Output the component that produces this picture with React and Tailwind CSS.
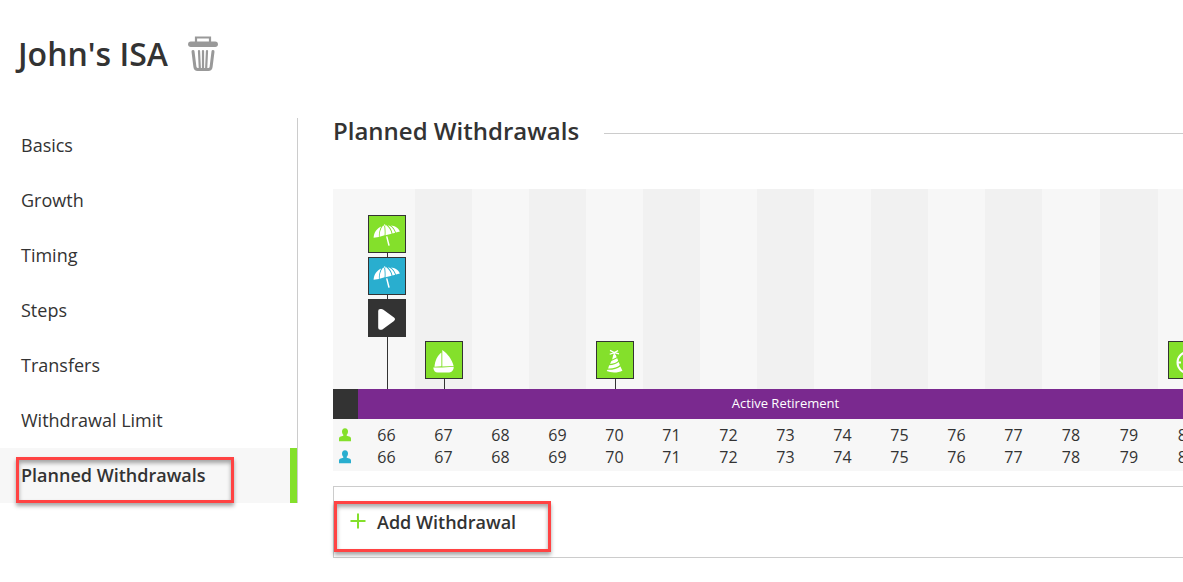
import clsx from 'clsx';

const NAV_ITEMS = ['Basics', 'Growth', 'Timing', 'Steps', 'Transfers', 'Withdrawal Limit', 'Planned Withdrawals'];

const AGES = [66, 67, 68, 69, 70, 71, 72, 73, 74, 75, 76, 77, 78, 79, 80];

const EVENTS = {
  66: [
    { icon: UmbrellaIcon, bg: 'bg-[#84e02b]' },
    { icon: UmbrellaIcon, bg: 'bg-[#29aecf]' },
    { icon: PlayIcon, bg: 'bg-[#333333]', last: true },
  ],
  67: [{ icon: BoatIcon, bg: 'bg-[#84e02b]' }],
  70: [{ icon: PartyHatIcon, bg: 'bg-[#84e02b]' }],
  80: [{ icon: ClockIcon, bg: 'bg-[#84e02b]' }],
};

function columnWidth(age) {
  return age >= 78 ? 'w-[58px]' : 'w-[57px]';
}

// ─── Icons ────────────────────────────────────────────────────────────────────

function TrashIcon() {
  return (
    <svg className="mt-px" width="30" height="36" viewBox="0 0 30 36" fill="none" stroke="#999999">
      <path d="M8 6V1.500h14V6" strokeWidth="2.200" />
      <path d="M2.800 8.300h24.400" strokeWidth="5.400" strokeLinecap="round" />
      <path
        d="M5 15.500l1.900 15.300q.3 2.600 2.800 2.600h10.600q2.500 0 2.800-2.600L25 15.500"
        strokeWidth="3"
        strokeLinecap="round"
      />
      <path d="M11 15l.8 17M15 15v17M19 15l-.8 17" strokeWidth="2.200" strokeLinecap="round" />
    </svg>
  );
}

function UmbrellaIcon() {
  return (
    <svg className="size-9" viewBox="1 1 36 36" fill="#fff">
      <path d="M5.600 22.800c.2-5.500 3.500-9.600 7.600-11.400-1.600 3-2.500 6.600-2.300 10.500z" />
      <path d="M11.600 21.700c-.1-4.400 1.100-8.200 3.100-10.800l1.400-.3c.4 3 .8 6.400.5 9.700z" />
      <path d="M17.500 20.200c.2-3.500 0-6.600-.5-9.700l1.300-.2c2.700 2 4.700 4.900 5.300 8.400z" />
      <path d="M24.500 18.500c-.7-3.400-2.300-6.100-4.600-8.200 3 .5 5.600 3 7.300 7.500z" />
      <path d="M28 17.500c-1.200-3.100-2.900-5.400-5.100-6.900 3.900.2 7.500 2.400 9 6z" />
      <path d="M16 9.500l1.100-.3.300 1.400-1.100.3zM18 21.600l1.400-.3 2.400 9.100-1.500.4z" />
    </svg>
  );
}

function PlayIcon() {
  return (
    <svg className="size-9" viewBox="1 1 36 36" fill="#fff">
      <path d="M10.200 12q0-2 2-2h1.200q1 0 2 .8l10.600 7.700q2 1.700 0 3.400l-10.600 7.900q-1 .9-2 .9h-1.200q-2 0-2-2z" />
    </svg>
  );
}

function BoatIcon() {
  return (
    <svg className="size-9" viewBox="1 1 36 36" fill="#fff">
      <path d="M16.400 11.500v13.800l-6.900.4c.4-5.800 2.900-11.200 6.900-14.200z" />
      <path d="M17.300 9c5.300 3.700 9.600 9.300 11.300 15.900l-11.300.5z" />
      <path d="M8.300 26.500h8.900l11.500-.7c.1 3.100-1.900 5.700-4.500 5.700H12.800c-2.700 0-4.300-2-4.500-5z" />
    </svg>
  );
}

function PartyHatIcon() {
  return (
    <svg className="size-9" viewBox="1 1 36 36" fill="#fff">
      <path d="M14 9.400l4.300 2.200 3.800-2M13.700 13.200l4.600-1.600 4.700 1.200M18.300 11.600v3" stroke="#fff" strokeWidth="1.200" fill="none" />
      <path d="M17.300 13.800l2.300-.2 1.100 2.700-4.600 2.200z" />
      <path d="M15.400 20.100l5.800-2.800 1 2.500c-1.600 1.800-4.600 3-8.100 3.200z" />
      <path d="M13.200 24.300c4-.2 7.200-1.300 9.500-3.200l1.200 3c-2.300 2.300-7.200 3.700-11.800 3.400z" />
      <path d="M11.500 28.800c4.800.3 9.500-1 12.900-3.400l2 4.300c-4 2.300-11.600 2.400-15.700.4z" />
    </svg>
  );
}

function ClockIcon() {
  return (
    <svg className="size-9" viewBox="1 1 36 36" fill="none" stroke="#fff" strokeWidth="2">
      <circle cx="20" cy="21.500" r="10.500" />
      <path d="M10 21.500h3M20 11v4M20 21.500l5-5" />
    </svg>
  );
}

function PersonIcon({ className }) {
  return (
    <svg className={className} width="12" height="14" viewBox="0 0 12 14" fill="currentColor">
      <path d="M6 .2c2 0 3 1.400 3 3.200 0 1.500-.6 2.800-1.300 3.400v1l2.500.6c1.200.3 1.800 1.200 1.800 2.400v2.400H0v-2.400C0 9.600.6 8.700 1.800 8.400l2.500-.6v-1C3.600 6.200 3 4.900 3 3.400 3 1.600 4 .2 6 .2z" />
    </svg>
  );
}

// ─── Sidebar ──────────────────────────────────────────────────────────────────

function Sidebar({ active }) {
  return (
    <nav className="h-[385px] w-[298px] shrink-0 border-r border-[#cccccc]">
      {NAV_ITEMS.map((item) => (
        <div
          key={item}
          className={clsx(
            'relative flex h-[55px] items-center pl-[21px] text-[18px]',
            item === active && 'border-r-[7px] border-[#84e02b] bg-[#f7f7f7] font-semibold',
          )}
        >
          {item}
          {item === active && <Highlight className="top-[9px] left-[16px] h-[46px] w-[218px]" />}
        </div>
      ))}
    </nav>
  );
}

function Highlight({ className }) {
  return (
    <span
      className={clsx(
        'pointer-events-none absolute border-3 border-[#ff4343] shadow-[0_3px_4px_rgba(0,0,0,0.35),inset_0_3px_4px_rgba(0,0,0,0.35)]',
        className,
      )}
    />
  );
}

// ─── Timeline ─────────────────────────────────────────────────────────────────

function EventStack({ events }) {
  return (
    <div className="flex flex-col items-center">
      {events.map(({ icon: Icon, bg, last }, i) => (
        <div key={i} className="flex flex-col items-center">
          <div className={clsx('flex size-[38px] items-center justify-center border border-[#333333]', bg)}>
            <Icon />
          </div>
          <div
            className={clsx(
              'ml-px w-px bg-[#333333]',
              last && 'h-[52px]',
              !last && events.length > 1 && 'h-1',
              events.length === 1 && 'h-2.5',
            )}
          />
        </div>
      ))}
    </div>
  );
}

function AgeRow({ color }) {
  return (
    <div className="flex h-[22px] items-center">
      <div className="w-[25px] shrink-0 pb-px pl-1.5">
        <PersonIcon className={color} />
      </div>
      {AGES.map((age) => (
        <span key={age} className={clsx('shrink-0 text-center text-[16px]', columnWidth(age))}>{age}</span>
      ))}
    </div>
  );
}

function Timeline() {
  return (
    <div className="overflow-hidden bg-[#f7f7f7]">
      <div className="flex h-[200px] pl-[25px]">
        {AGES.map((age, i) => (
          <div
            key={age}
            className={clsx('flex shrink-0 flex-col justify-end', columnWidth(age), i % 2 === 1 && 'bg-[#f1f1f1]')}
          >
            {EVENTS[age] && <EventStack events={EVENTS[age]} />}
          </div>
        ))}
      </div>
      <div className="flex h-[30px]">
        <div className="w-[25px] shrink-0 bg-[#333333]" />
        <div className="flex w-[855px] shrink-0 items-center justify-center bg-[#7a298f] text-[13px] text-white">
          Active Retirement
        </div>
      </div>
      <div className="flex h-[52px] flex-col pt-[5px]">
        <AgeRow color="text-[#84e02b]" />
        <AgeRow color="text-[#29aecf]" />
      </div>
    </div>
  );
}

// ─── Page ─────────────────────────────────────────────────────────────────────

export default function App() {
  return (
    <div className="h-[582px] w-[1183px] overflow-hidden bg-white font-['Open_Sans',sans-serif] text-[#333333]">
      <header className="flex h-[118px] items-start gap-5 pt-[35px] pl-[18px]">
        <h1 className="text-[32px] leading-[38px] font-semibold">John's ISA</h1>
        <TrashIcon />
      </header>

      <div className="flex">
        <Sidebar active="Planned Withdrawals" />

        <main className="min-w-0 flex-1 pl-[35px]">
          <div className="flex h-[71px] items-start gap-[25px]">
            <h2 className="text-[24px] leading-[26px] font-semibold">Planned Withdrawals</h2>
            <div className="mt-[15px] h-px flex-1 bg-[#cccccc]" />
          </div>

          <Timeline />

          <div className="relative mt-[15px] flex h-[72px] items-center border border-r-0 border-[#cccccc] pl-4">
            <svg className="mb-0.5" width="16" height="16" viewBox="0 0 16 16" stroke="#84e02b" strokeWidth="2">
              <path d="M.500 8h15M8 .500v15" />
            </svg>
            <span className="ml-[11px] text-[18px] font-semibold">Add Withdrawal</span>
            <Highlight className="top-[14px] left-0 h-[51px] w-[217px]" />
          </div>
        </main>
      </div>
    </div>
  );
}
